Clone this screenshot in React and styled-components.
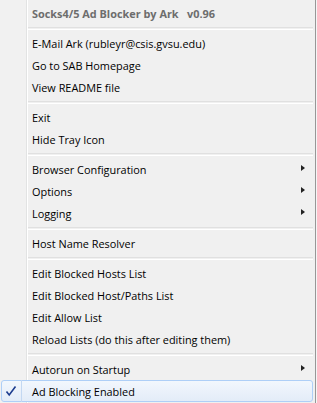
import React from "react";
import styled, { createGlobalStyle } from "styled-components";

const Global = createGlobalStyle`
  html, body { margin: 0; padding: 0; background: #f5f5f5; }
  #root { width: 317px; height: 403px; overflow: hidden; }
`;

const Menu = styled.div`
  width: 315px;
  height: 403px;
  border-right: 1px solid #979797;
  display: flex;
  flex-direction: column;
  font-family: "Open Sans", "Noto Sans", sans-serif;
  font-size: 10.9px;
  color: #000;
  background: linear-gradient(
    to right,
    #f1f1f1 0,
    #f1f1f1 26px,
    #e2e3e3 26px,
    #e2e3e3 27px,
    #ffffff 27px,
    #ffffff 28px,
    #f0f0f0 28px
  );
`;

const Header = styled.div`
  height: 24px;
  padding-left: 32px;
  display: flex;
  align-items: center;
  padding-top: 2px;
  box-sizing: border-box;
  font-weight: bold;
  color: #6d6d6d;
  white-space: pre;
`;

const Separator = styled.div`
  height: 8px;
  display: flex;
  align-items: center;
  padding-left: 28px;
  padding-right: 2px;
  &::before {
    content: "";
    flex: 1;
    height: 1px;
    border-top: 1px solid #e0e0e0;
    border-bottom: 1px solid #ffffff;
    margin-top: 1px;
  }
`;

const Item = styled.div`
  position: relative;
  height: 22px;
  display: flex;
  align-items: center;
  padding-left: 32px;
  padding-right: 10px;
  box-sizing: border-box;
  white-space: nowrap;
`;

const Highlight = styled.div`
  position: absolute;
  left: 1px;
  right: 2px;
  top: 0;
  bottom: 0;
  border: 1px solid #aecff7;
  border-radius: 3px;
  background: linear-gradient(to bottom, #f2f7fd, #e3ecf8);
  box-sizing: border-box;
`;

const CheckBox = styled.div`
  position: absolute;
  left: 1px;
  top: 0;
  width: 21px;
  height: 22px;
  border-right: 1px solid #c3d8f2;
  box-sizing: border-box;
  display: flex;
  align-items: center;
  justify-content: center;
`;

const Label = styled.span`
  position: relative;
`;

const Arrow = styled.div`
  position: absolute;
  right: 10px;
  top: 7px;
  width: 0;
  height: 0;
  border-top: 3.5px solid transparent;
  border-bottom: 3.5px solid transparent;
  border-left: 4px solid #222;
`;

const items = [
  { type: "sep" },
  { label: "E-Mail Ark (rubleyr@csis.gvsu.edu)" },
  { label: "Go to SAB Homepage" },
  { label: "View README file" },
  { type: "sep" },
  { label: "Exit" },
  { label: "Hide Tray Icon" },
  { type: "sep" },
  { label: "Browser Configuration", sub: true },
  { label: "Options", sub: true },
  { label: "Logging", sub: true },
  { type: "sep" },
  { label: "Host Name Resolver" },
  { type: "sep" },
  { label: "Edit Blocked Hosts List" },
  { label: "Edit Blocked Host/Paths List" },
  { label: "Edit Allow List" },
  { label: "Reload Lists (do this after editing them)" },
  { type: "sep" },
  { label: "Autorun on Startup", sub: true },
  { label: "Ad Blocking Enabled", checked: true, active: true },
];

export default function App() {
  return (
    <>
      <Global />
      <Menu>
        <Header>{"Socks4/5 Ad Blocker by Ark   v0.96"}</Header>
        {items.map((it, i) =>
          it.type === "sep" ? (
            <Separator key={i} />
          ) : (
            <Item key={i}>
              {it.active && <Highlight />}
              {it.checked && (
                <CheckBox>
                  <svg width="12" height="12" viewBox="0 0 12 12">
                    <path
                      d="M1.5 6.5 L4.2 10 L10.5 1.5"
                      fill="none"
                      stroke="#1d3d8f"
                      strokeWidth="1.6"
                    />
                  </svg>
                </CheckBox>
              )}
              <Label>{it.label}</Label>
              {it.sub && <Arrow />}
            </Item>
          )
        )}
      </Menu>
    </>
  );
}
